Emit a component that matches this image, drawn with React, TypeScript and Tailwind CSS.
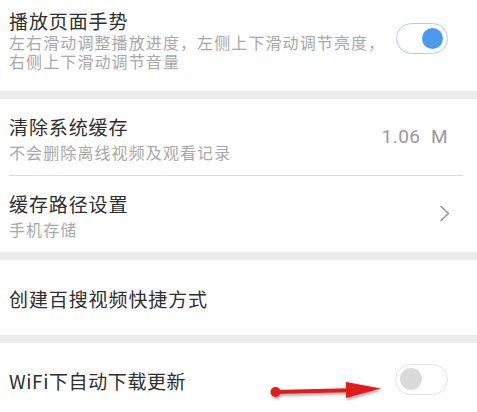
function Toggle({ on }: { on: boolean }) {
  return on ? (
    <div className="flex h-[31px] w-[52px] items-center justify-end rounded-full border border-[#a9d3ea] bg-white pr-[4px]">
      <div className="h-[21px] w-[21px] rounded-full bg-[#4a9bee]" />
    </div>
  ) : (
    <div className="flex h-[31px] w-[53px] items-center justify-start rounded-full border border-[#e2e2e2] bg-white pl-[4px]">
      <div className="h-[22px] w-[22px] rounded-full bg-[#dadada]" />
    </div>
  );
}

function Band() {
  return <div className="h-[8px] bg-[#ebebeb]" />;
}

export default function App() {
  return (
    <div
      className="h-[412px] w-[477px] overflow-hidden bg-white"
      style={{ fontFamily: '"Noto Sans CJK SC", "Noto Sans", sans-serif' }}
    >
      {/* 播放页面手势 */}
      <div className="flex h-[91px] items-start pl-[9px] pr-[29px] pt-[8px]">
        <div className="flex-1">
          <div className="text-[19px] leading-[25px] tracking-[0.9px] text-[#2e2e2e]">播放页面手势</div>
          <div className="text-[16px] leading-[19px] tracking-[1.1px] text-[#a8a8a8]">
            左右滑动调整播放进度，左侧上下滑动调节亮度，
            <br />
            右侧上下滑动调节音量
          </div>
        </div>
        <div className="mt-[15px]">
          <Toggle on />
        </div>
      </div>

      <Band />

      {/* 清除系统缓存 */}
      <div className="flex h-[76px] items-center pl-[9px] pr-[29px]">
        <div className="flex-1 pt-[2px]">
          <div className="text-[19px] leading-[26px] tracking-[0.9px] text-[#2e2e2e]">清除系统缓存</div>
          <div className="mt-[1px] text-[16px] leading-[22px] tracking-[1.1px] text-[#a8a8a8]">不会删除离线视频及观看记录</div>
        </div>
        <div
          className="text-[19px] tracking-[0.5px] text-[#9a9a9a]"
          style={{ fontFamily: 'Roboto, "Noto Sans", sans-serif' }}
        >
          1.06&nbsp;&nbsp;M
        </div>
      </div>

      <div className="ml-[9px] mr-[14px] h-px bg-[#dedede]" />

      {/* 缓存路径设置 */}
      <div className="flex h-[76px] items-center pl-[9px] pr-[27px]">
        <div className="flex-1 pt-[2px]">
          <div className="text-[19px] leading-[26px] tracking-[0.9px] text-[#2e2e2e]">缓存路径设置</div>
          <div className="mt-[1px] text-[16px] leading-[22px] tracking-[1.1px] text-[#a8a8a8]">手机存储</div>
        </div>
        <svg width="11" height="17" viewBox="0 0 11 17" className="mb-[2px]">
          <path d="M1.5 1 L9.5 8.5 L1.5 16" fill="none" stroke="#8a8a8a" strokeWidth="1.2" />
        </svg>
      </div>

      <Band />

      {/* 创建百搜视频快捷方式 */}
      <div className="flex h-[75px] items-center pl-[9px] pt-[3px]">
        <div className="text-[19px] leading-[26px] tracking-[0.9px] text-[#2e2e2e]">创建百搜视频快捷方式</div>
      </div>

      <Band />

      {/* WiFi下自动下载更新 */}
      <div className="relative flex h-[76px] items-center pl-[9px] pr-[29px]">
        <div className="flex-1 text-[19px] leading-[26px] tracking-[0.6px] text-[#2e2e2e]">WiFi下自动下载更新</div>
        <div className="mb-[4px]">
          <Toggle on={false} />
        </div>
        <svg
          className="pointer-events-none absolute left-[264px] top-[34px]"
          width="124"
          height="24"
          viewBox="0 0 124 24"
        >
          <defs>
            <filter id="sh" x="-10%" y="-50%" width="120%" height="200%">
              <feDropShadow dx="1" dy="2" stdDeviation="1.5" floodColor="#000" floodOpacity="0.35" />
            </filter>
          </defs>
          <g filter="url(#sh)" fill="#e21a1a">
            <circle cx="11.5" cy="15" r="5" />
            <path d="M11 13 L84 11.2 L84 15.2 L11 17 Z" />
            <path d="M82 5 L117 11.5 L82 21 Z" />
          </g>
        </svg>
      </div>
    </div>
  );
}
